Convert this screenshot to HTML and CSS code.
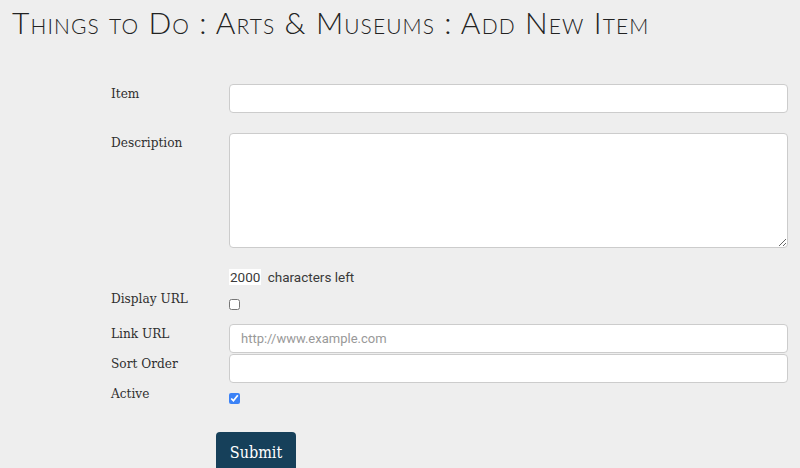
FILE: index.html
```html
<!DOCTYPE html>
<html>
<head>
<meta charset="utf-8">
<link rel="stylesheet" href="styles.css">
</head>
<body>
<h1 class="title">Things to Do : Arts &amp; Museums : Add New Item</h1>
<form class="form">
  <div class="row row-item">
    <label class="label">Item</label>
    <div class="field"><input class="input" type="text"></div>
  </div>
  <div class="row row-desc">
    <label class="label">Description</label>
    <div class="field"><textarea class="textarea"></textarea></div>
  </div>
  <div class="row row-count">
    <div class="label"></div>
    <div class="field counter"><span class="count">2000</span> characters left</div>
  </div>
  <div class="row row-display">
    <label class="label">Display URL</label>
    <div class="field"><input class="check" type="checkbox"></div>
  </div>
  <div class="row row-link">
    <label class="label">Link URL</label>
    <div class="field"><input class="input" type="text" placeholder="http://www.example.com"></div>
  </div>
  <div class="row row-sort">
    <label class="label">Sort Order</label>
    <div class="field"><input class="input" type="text"></div>
  </div>
  <div class="row row-active">
    <label class="label">Active</label>
    <div class="field"><input class="check" type="checkbox" checked></div>
  </div>
  <div class="actions">
    <button class="submit" type="button">Submit</button>
  </div>
</form>
</body>
</html>
```
FILE: styles.css
```css
html, body {
  margin: 0;
  padding: 0;
  background: #eeeeee;
  overflow: hidden;
}
body {
  width: 800px;
  height: 468px;
  font-family: "DejaVu Serif Condensed", "DejaVu Serif", serif;
  color: #333;
}
.title {
  margin: 0;
  padding: 4px 0 0 12px;
  font-family: "Lato", sans-serif;
  font-weight: 300;
  font-variant: small-caps;
  font-size: 30px;
  line-height: 36px;
  letter-spacing: 1.1px;
  color: #222;
  white-space: nowrap;
}
.form {
  padding: 44px 0 0 111px;
}
.row {
  display: flex;
  align-items: flex-start;
}
.label {
  width: 118px;
  flex: none;
  font-family: "DejaVu Serif Condensed", "DejaVu Serif", serif;
  font-size: 13.5px;
  line-height: 18px;
  color: #2e2e2e;
}
.field {
  width: 559px;
  flex: none;
}
.input {
  display: block;
  box-sizing: border-box;
  width: 559px;
  height: 29px;
  margin: 0;
  border: 1px solid #ccc;
  border-radius: 4px;
  background: #fff;
  padding: 0 11px;
  font-family: "Roboto", sans-serif;
  font-size: 13px;
  color: #333;
}
.input::placeholder {
  color: #999;
}
.textarea {
  display: block;
  box-sizing: border-box;
  width: 559px;
  height: 115px;
  margin: 0;
  border: 1px solid #ccc;
  border-radius: 4px;
  background: #fff;
}
.row-desc { margin-top: 20px; }
.row-count { margin-top: 19px; }
.counter {
  font-family: "Roboto", sans-serif;
  font-size: 13.5px;
  line-height: 20px;
  color: #3a3a3a;
}
.count {
  background: #fff;
  padding: 0 1px;
  margin-right: 3px;
}
.row-display { margin-top: 2px; }
.check {
  margin: 10px 0 0 0;
  width: 11px;
  height: 11px;
}
.row-link { margin-top: 10px; }
.row-sort { margin-top: 1px; }
.row-active .label { padding-top: 1px; }
.check:checked { accent-color: #3b82f6; }
.actions {
  padding: 24px 0 0 105px;
}
.submit {
  font-family: "DejaVu Serif Condensed", "DejaVu Serif", serif;
  font-size: 16px;
  color: #fff;
  background: #16405a;
  border: none;
  border-radius: 4px;
  width: 80px;
  height: 40px;
  padding: 0;
}
```
